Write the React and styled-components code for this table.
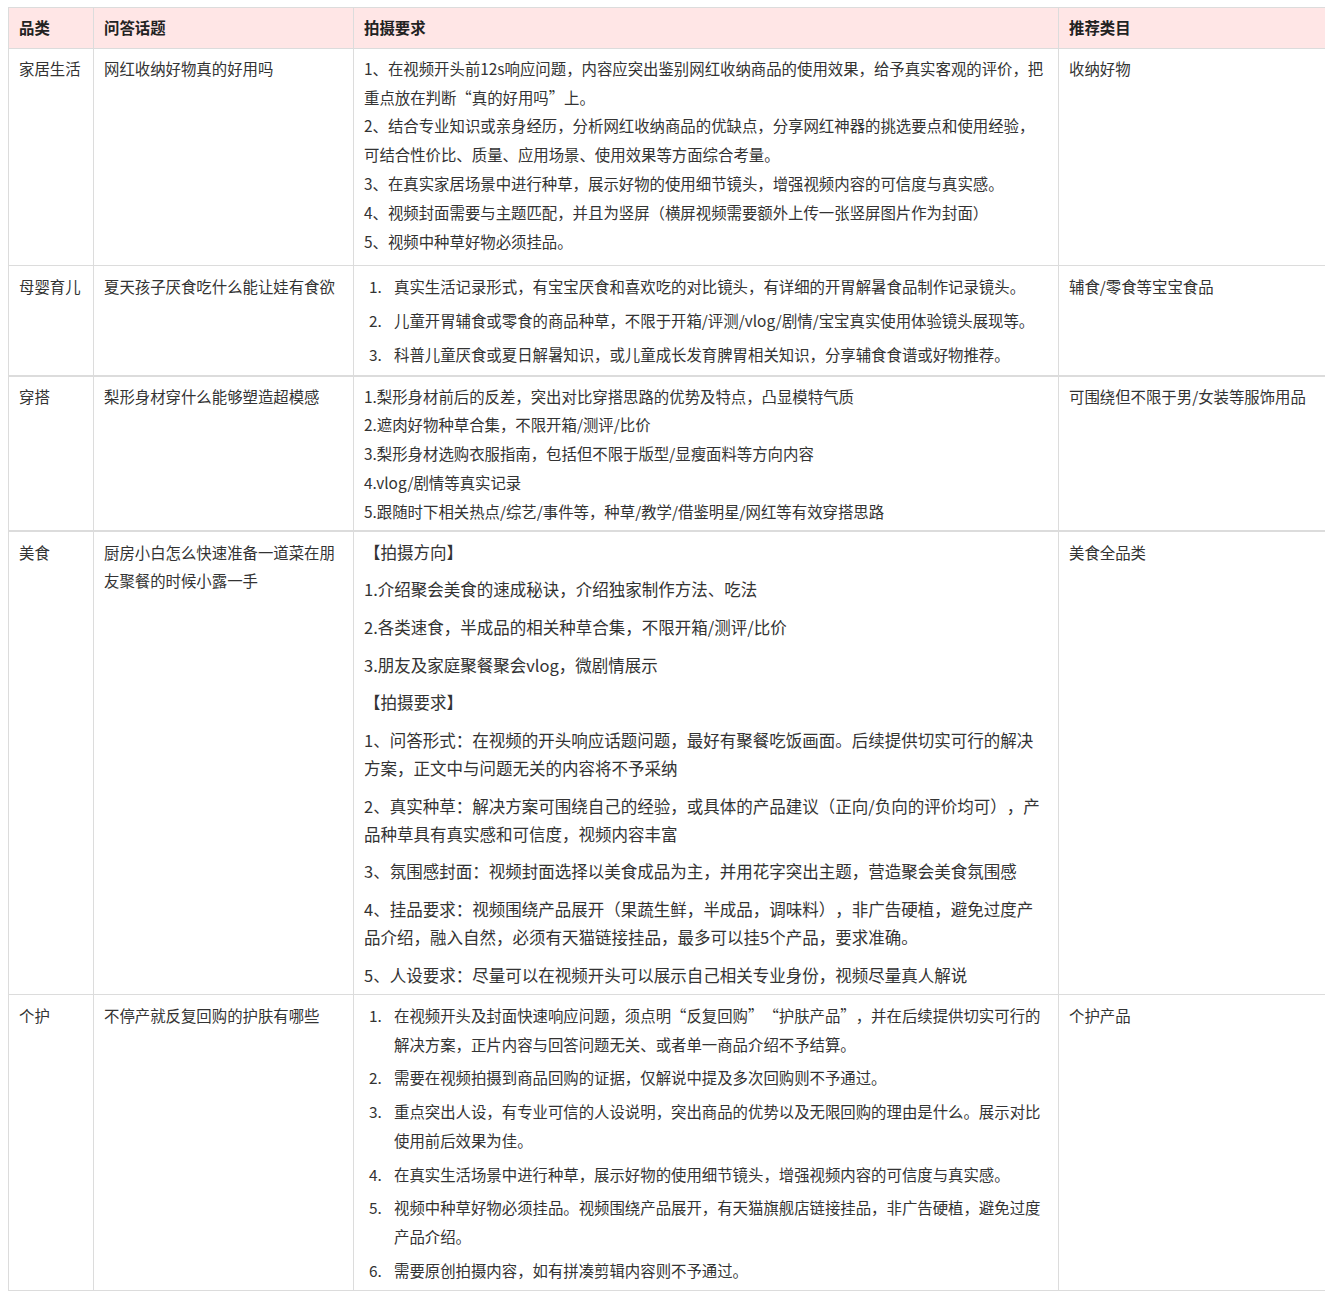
import React from "react";
import styled, { createGlobalStyle } from "styled-components";

const Global = createGlobalStyle`
  body {
    margin: 7px 8px 8px;
    background: #fff;
    font-family: "Noto Sans CJK SC", "Noto Sans", sans-serif;
    color: #333;
  }
  * { text-spacing-trim: space-all; }
`;

const Table = styled.table`
  width: 100%;
  border-collapse: collapse;
  table-layout: fixed;
  font-size: 15.4px;
  line-height: 28.8px;
  color: #333;
`;

const HeadCell = styled.th`
  background: #ffe6e6;
  border: 1px solid #dcdcdc;
  padding: 5px 10px 6px;
  text-align: left;
  font-weight: 700;
  color: #222;
`;

const Cell = styled.td`
  border: 1px solid #dcdcdc;
  border-top-width: ${(p) => (p.$thick ? "2px" : "1px")};
  padding: ${(p) => p.$pad || "7px 10px 6px"};
  vertical-align: top;
  word-break: break-all;
`;

const Line = styled.div`
  margin: 0;
`;

const Big = styled.p`
  margin: 0 0 9.7px;
  font-size: 16.5px;
  line-height: 28px;
  &:last-child { margin-bottom: 0; }
`;

const List = styled.ol`
  list-style: none;
  margin: 0;
  padding: 0;
  counter-reset: item;
`;

const Item = styled.li`
  counter-increment: item;
  display: flex;
  line-height: 29px;
  margin-bottom: 4.6px;
  &:last-child { margin-bottom: 0; }
  &::before {
    content: counter(item) ".";
    flex: 0 0 25px;
    padding-left: 5px;
  }
`;

const ItemText = styled.span`
  flex: 1;
  min-width: 0;
`;

const rows = [
  {
    cat: "家居生活",
    topic: "网红收纳好物真的好用吗",
    kind: "lines",
    pad: "5px 10px 10px",
    req: [
      "1、在视频开头前12s响应问题，内容应突出鉴别网红收纳商品的使用效果，给予真实客观的评价，把重点放在判断“真的好用吗”上。",
      "2、结合专业知识或亲身经历，分析网红收纳商品的优缺点，分享网红神器的挑选要点和使用经验，可结合性价比、质量、应用场景、使用效果等方面综合考量。",
      "3、在真实家居场景中进行种草，展示好物的使用细节镜头，增强视频内容的可信度与真实感。",
      "4、视频封面需要与主题匹配，并且为竖屏（横屏视频需要额外上传一张竖屏图片作为封面）",
      "5、视频中种草好物必须挂品。",
    ],
    rec: "收纳好物",
  },
  {
    cat: "母婴育儿",
    topic: "夏天孩子厌食吃什么能让娃有食欲",
    kind: "list",
    pad: "6px 10px 6px",
    req: [
      "真实生活记录形式，有宝宝厌食和喜欢吃的对比镜头，有详细的开胃解暑食品制作记录镜头。",
      "儿童开胃辅食或零食的商品种草，不限于开箱/评测/vlog/剧情/宝宝真实使用体验镜头展现等。",
      "科普儿童厌食或夏日解暑知识，或儿童成长发育脾胃相关知识，分享辅食食谱或好物推荐。",
    ],
    rec: "辅食/零食等宝宝食品",
  },
  {
    cat: "穿搭",
    topic: "梨形身材穿什么能够塑造超模感",
    kind: "lines",
    thick: true,
    pad: "5px 10px 4px",
    req: [
      "1.梨形身材前后的反差，突出对比穿搭思路的优势及特点，凸显模特气质",
      "2.遮肉好物种草合集，不限开箱/测评/比价",
      "3.梨形身材选购衣服指南，包括但不限于版型/显瘦面料等方向内容",
      "4.vlog/剧情等真实记录",
      "5.跟随时下相关热点/综艺/事件等，种草/教学/借鉴明星/网红等有效穿搭思路",
    ],
    rec: "可围绕但不限于男/女装等服饰用品",
  },
  {
    cat: "美食",
    topic: "厨房小白怎么快速准备一道菜在朋友聚餐的时候小露一手",
    kind: "big",
    thick: true,
    pad: "6px 10px 5px",
    req: [
      ["【拍摄方向】"],
      ["1.介绍聚会美食的速成秘诀，介绍独家制作方法、吃法"],
      ["2.各类速食，半成品的相关种草合集，不限开箱/测评/比价"],
      ["3.朋友及家庭聚餐聚会vlog，微剧情展示"],
      ["【拍摄要求】"],
      ["1、问答形式：在视频的开头响应话题问题，最好有聚餐吃饭画面。后续提供切实可行的解决", "方案，正文中与问题无关的内容将不予采纳"],
      ["2、真实种草：解决方案可围绕自己的经验，或具体的产品建议（正向/负向的评价均可），产", "品种草具有真实感和可信度，视频内容丰富"],
      ["3、氛围感封面：视频封面选择以美食成品为主，并用花字突出主题，营造聚会美食氛围感"],
      ["4、挂品要求：视频围绕产品展开（果蔬生鲜，半成品，调味料），非广告硬植，避免过度产", "品介绍，融入自然，必须有天猫链接挂品，最多可以挂5个产品，要求准确。"],
      ["5、人设要求：尽量可以在视频开头可以展示自己相关专业身份，视频尽量真人解说"],
    ],
    rec: "美食全品类",
  },
  {
    cat: "个护",
    topic: "不停产就反复回购的护肤有哪些",
    kind: "list",
    pad: "6px 10px 5px",
    req: [
      "在视频开头及封面快速响应问题，须点明“反复回购”“护肤产品”，并在后续提供切实可行的解决方案，正片内容与回答问题无关、或者单一商品介绍不予结算。",
      "需要在视频拍摄到商品回购的证据，仅解说中提及多次回购则不予通过。",
      "重点突出人设，有专业可信的人设说明，突出商品的优势以及无限回购的理由是什么。展示对比使用前后效果为佳。",
      "在真实生活场景中进行种草，展示好物的使用细节镜头，增强视频内容的可信度与真实感。",
      "视频中种草好物必须挂品。视频围绕产品展开，有天猫旗舰店链接挂品，非广告硬植，避免过度产品介绍。",
      "需要原创拍摄内容，如有拼凑剪辑内容则不予通过。",
    ],
    rec: "个护产品",
  },
];

function Requirements({ row }) {
  if (row.kind === "list") {
    return (
      <List>
        {row.req.map((t, i) => (
          <Item key={i}>
            <ItemText>{t}</ItemText>
          </Item>
        ))}
      </List>
    );
  }
  if (row.kind === "big") {
    return row.req.map((parts, i) => (
      <Big key={i}>
        {parts.map((p, j) => (
          <React.Fragment key={j}>
            {j > 0 && <br />}
            {p}
          </React.Fragment>
        ))}
      </Big>
    ));
  }
  return row.req.map((t, i) => <Line key={i}>{t}</Line>);
}

export default function App() {
  return (
    <>
      <Global />
      <Table>
        <colgroup>
          <col style={{ width: 85 }} />
          <col style={{ width: 260 }} />
          <col style={{ width: 705 }} />
          <col style={{ width: 267 }} />
        </colgroup>
        <thead>
          <tr>
            <HeadCell>品类</HeadCell>
            <HeadCell>问答话题</HeadCell>
            <HeadCell>拍摄要求</HeadCell>
            <HeadCell>推荐类目</HeadCell>
          </tr>
        </thead>
        <tbody>
          {rows.map((row, i) => (
            <tr key={i}>
              <Cell $thick={row.thick} $pad={row.pad}>{row.cat}</Cell>
              <Cell $thick={row.thick} $pad={row.pad}>{row.topic}</Cell>
              <Cell $thick={row.thick} $pad={row.pad}>
                <Requirements row={row} />
              </Cell>
              <Cell $thick={row.thick} $pad={row.pad}>{row.rec}</Cell>
            </tr>
          ))}
        </tbody>
      </Table>
    </>
  );
}
